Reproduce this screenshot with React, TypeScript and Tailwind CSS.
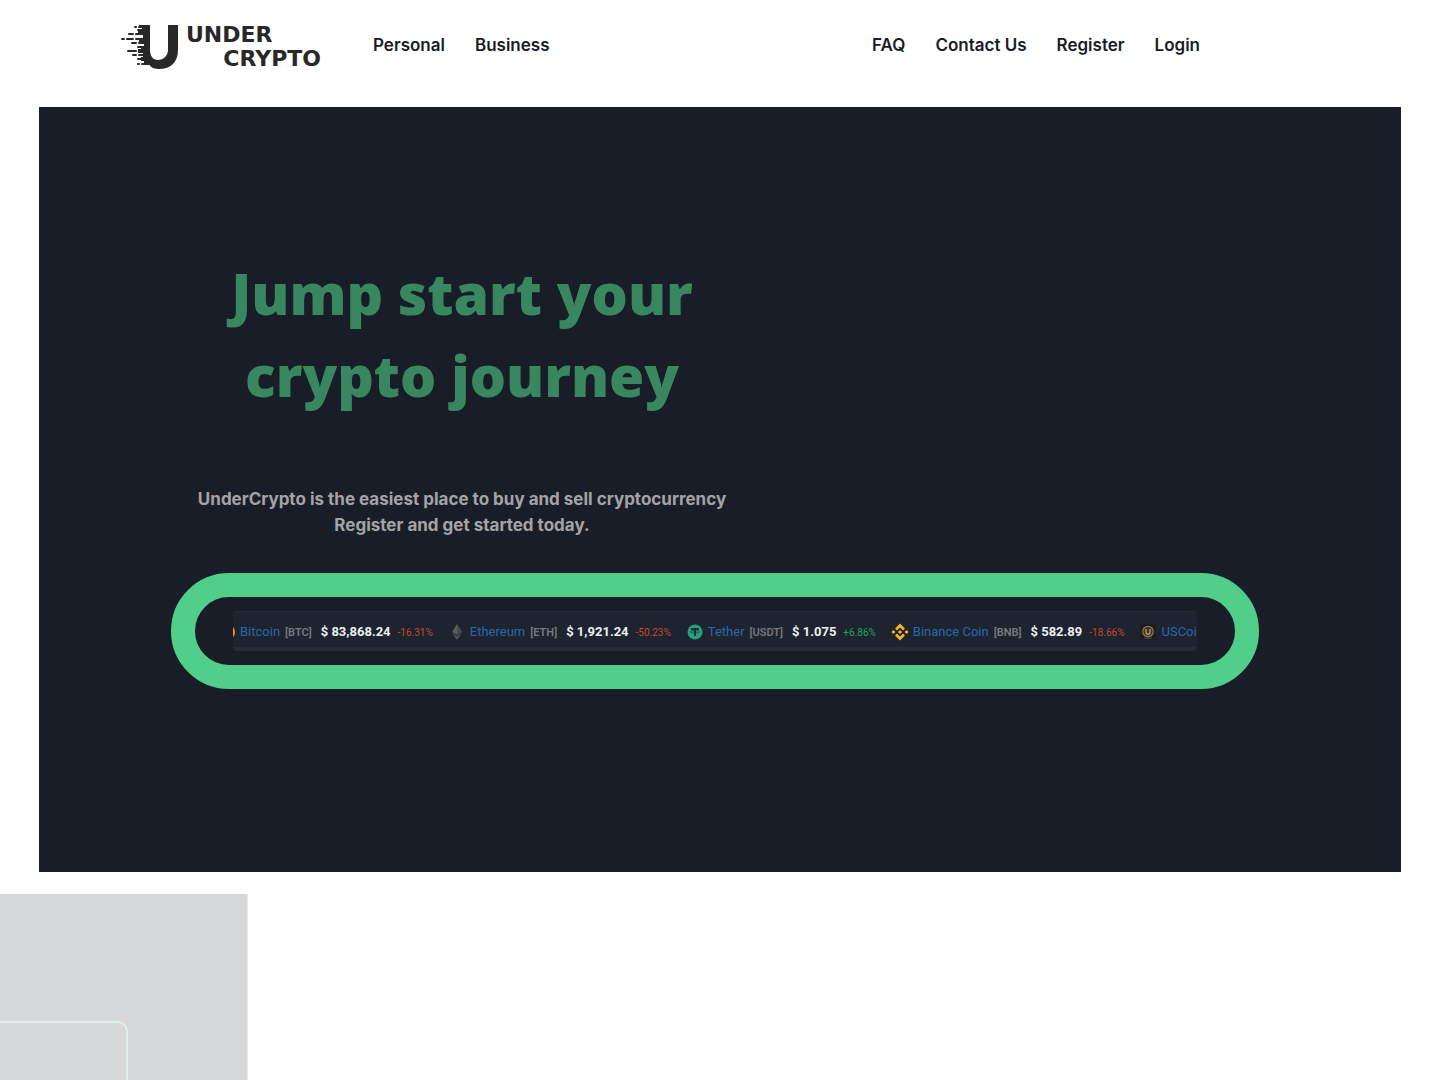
import type { ReactNode } from "react"

interface Coin {
  name: string
  symbol?: string
  price?: string
  change?: string
  icon: ReactNode
}

const leftLinks = ["Personal", "Business"]
const rightLinks = ["FAQ", "Contact Us", "Register", "Login"]

const coins: Coin[] = [
  {
    name: "Bitcoin",
    symbol: "BTC",
    price: "83,868.24",
    change: "-16.31%",
    icon: <circle cx="8" cy="8" r="8" fill="#f7931a" />,
  },
  {
    name: "Ethereum",
    symbol: "ETH",
    price: "1,921.24",
    change: "-50.23%",
    icon: (
      <>
        <path d="M8 0 13 8 8 11 3 8Z" fill="#5b5e63" />
        <path d="M8 0 13 8 8 11Z" fill="#46494f" />
        <path d="M3 9 8 12 13 9 8 16Z" fill="#505359" />
      </>
    ),
  },
  {
    name: "Tether",
    symbol: "USDT",
    price: "1.075",
    change: "+6.86%",
    icon: (
      <>
        <circle cx="8" cy="8" r="7.5" fill="#26a17b" />
        <path d="M4 4h8v2H9v6H7V6H4z" fill="#1e3038" />
        <ellipse cx="8" cy="7.8" rx="4.5" ry="1.2" fill="none" stroke="#1e3038" strokeWidth="0.7" />
      </>
    ),
  },
  {
    name: "Binance Coin",
    symbol: "BNB",
    price: "582.89",
    change: "-18.66%",
    icon: (
      <g fill="#f0b42c">
        <path d="M8-.5 13 4.5 11 6.5 8 3.5 5 6.5 3 4.5Z" />
        <path d="M8 16.5 13 11.5 11 9.5 8 12.5 5 9.5 3 11.5Z" />
        <path d="M8 5.9 10.1 8 8 10.1 5.9 8Z" />
        <path d="M1.4 5.9 3.5 8 1.4 10.1-.7 8Z" />
        <path d="M14.6 5.9 16.7 8 14.6 10.1 12.5 8Z" />
      </g>
    ),
  },
  {
    name: "USCoin",
    icon: (
      <>
        <path d="M0 0h16v16H0z" fill="#1b1c22" />
        <circle cx="8" cy="7.5" r="5.2" fill="#3b3226" stroke="#92784e" strokeWidth="1.3" />
        <path d="M6 5v3.2a2 2 0 0 0 4 0V5" fill="none" stroke="#c3a36b" strokeWidth="1.2" />
        <path d="M4.5 14.3h7" stroke="#665238" />
      </>
    ),
  },
]

function Logo() {
  return (
    <a href="#" aria-label="Under Crypto" className="flex h-[48px] w-[200px] shrink-0 text-[#282828]">
      <svg viewBox="0 0 58 48" className="h-[48px] w-[58px] shrink-0">
        <path
          d="M18 2H29V27C29 33 32 37 37 37S47 33 47 27V2H57V27C57 39 50 46 38 46C34 46 31 45 29 43V41H23V38H20V34H22V30H17V26H20V23H23V19H18V15H22V11H17V8H21V5H18Z"
          fill="currentColor"
        />
        <path
          d="M14 4h1M18 4h5M17 7h5M8 11h4M15 11h8M1 16h2M6 16h6M15 16h9M11 20h4M18 20h6M17 24h7M7 28h8M18 28h7M12 32h3M18 32h7M17 36h9M17 41h1M21 41h9"
          stroke="currentColor"
          strokeWidth="2"
          strokeLinecap="round"
        />
      </svg>
      <span className="flex min-w-0 flex-1 flex-col pl-[7px] font-['DejaVu_Sans'] text-[22px] leading-[24px] font-bold">
        <span>UNDER</span>
        <span className="self-end">CRYPTO</span>
      </span>
    </a>
  )
}

function NavLinks({ links }: { links: string[] }) {
  return (
    <ul className="flex gap-[30px]">
      {links.map((link) => (
        <li key={link}>
          <a href="#" className="whitespace-nowrap">
            {link}
          </a>
        </li>
      ))}
    </ul>
  )
}

function TickerItem({ coin }: { coin: Coin }) {
  const changeColor = coin.change?.startsWith("+") ? "text-[#22a45b]" : "text-[#c04a2b]"

  return (
    <li className="flex shrink-0 items-baseline whitespace-nowrap">
      <svg viewBox="0 0 16 16" className="size-4 self-center overflow-visible">
        {coin.icon}
      </svg>
      <a href="#" className="ml-[5px] text-[13px] text-[#2b66ad]">
        {coin.name}
      </a>
      {coin.symbol && (
        <span className="ml-[5px] text-[11px] font-semibold text-[#777980]">[{coin.symbol}]</span>
      )}
      {coin.price && (
        <span className="ml-[9px] text-[13px] font-bold text-[#eceef1]">$ {coin.price}</span>
      )}
      {coin.change && <span className={`ml-[7px] text-[10px] ${changeColor}`}>{coin.change}</span>}
    </li>
  )
}

export default function App() {
  return (
    <div className="flex min-h-screen flex-col overflow-hidden bg-white font-[Inter,sans-serif]">
      <header className="flex h-[107px] items-start pt-[23px] pr-[240px] pl-[121px]">
        <Logo />
        <nav className="ml-[52px] flex flex-1 justify-between pt-[10px] text-[17px] leading-6 font-semibold text-[#191c26]">
          <NavLinks links={leftLinks} />
          <NavLinks links={rightLinks} />
        </nav>
      </header>

      <main className="flex flex-1 flex-col">
        <section className="mx-[39px] h-[765px] bg-[#191d27] pt-[145px]">
          <div className="ml-[123px] w-[600px] max-w-full text-center">
            <h1 className="font-['Open_Sans',sans-serif] text-[57px] leading-[82px] font-extrabold text-[#398760]">
              Jump start your
              <br />
              crypto journey
            </h1>
            <p className="mt-[70px] text-[17px] leading-[26px] font-bold text-[#a3a4a8]">
              UnderCrypto is the easiest place to buy and sell cryptocurrency
              <br />
              Register and get started today.
            </p>
          </div>

          <div className="mt-[35px] mr-[142px] ml-[132px] rounded-full border-24 border-[#51cf8a] px-[38px] py-[14px]">
            <div className="h-[40px] overflow-hidden rounded-[4px] border-t border-b-4 border-t-[#272c3a] border-b-[#262b38] bg-[#1e2330]">
              {/* first coin is already half scrolled out */}
              <ul className="-ml-[14px] flex items-center gap-[16px] pt-[10px] font-[Roboto,sans-serif]">
                {coins.map((coin) => (
                  <TickerItem key={coin.name} coin={coin} />
                ))}
              </ul>
            </div>
          </div>
        </section>

        <section className="mt-[22px] flex w-[248px] flex-1 flex-col border-r border-[#e7e7e8] bg-[#d6d7d8] pt-[127px]">
          <div className="w-[128px] flex-1 rounded-tr-[10px] border-t-2 border-r-2 border-[#dcf3e7]" />
        </section>
      </main>
    </div>
  )
}
